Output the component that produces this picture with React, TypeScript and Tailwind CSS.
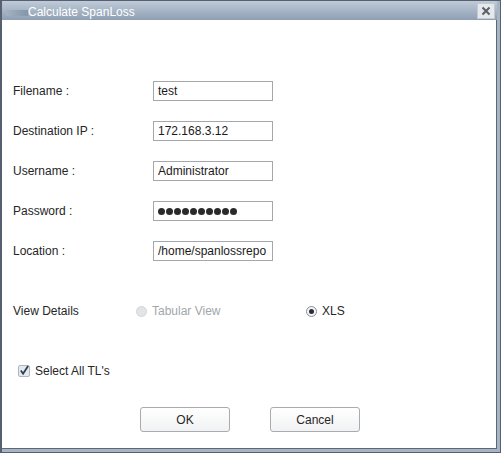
import React from "react";

const font = { fontFamily: '"Liberation Sans", Arial, sans-serif' };

function Field({ label, value, password }: { label: string; value: string; password?: boolean }) {
  return (
    <div className="flex items-center h-[20px]">
      <div className="w-[140px] text-[12px] text-[#262626]">{label}</div>
      <div className="w-[120px] h-[20px] border border-[#a4a7ab] bg-white flex items-center pl-[4px] overflow-hidden whitespace-nowrap text-[12px] text-[#1a1a1a]">
        {password ? (
          <span className="flex gap-[1px]">
            {Array.from({ length: 10 }).map((_, i) => (
              <span key={i} className="w-[7px] h-[7px] rounded-full bg-[#2a2a2a]" />
            ))}
          </span>
        ) : (
          value
        )}
      </div>
    </div>
  );
}

export default function App() {
  return (
    <div style={font} className="w-[501px] h-[453px] bg-[#56606e] pl-[2px] pt-[1px] pr-[1px] pb-[1px]">
      <div className="w-full h-full bg-[#a6b4c4] flex flex-col pr-[3px] pb-[3px]">
        {/* title bar */}
        <div className="h-[19px] bg-gradient-to-b from-[#bfcbd8] to-[#8f9fb3] flex items-center relative">
          <div className="absolute left-[4px] top-[9px] w-[22px] h-[6px] bg-gradient-to-r from-[#a3b1c2] to-[#8595aa]" />
          <span className="ml-[26px] mt-[3px] text-[12px] text-white leading-none">Calculate SpanLoss</span>
          <div className="ml-auto mr-[2px] mt-[1px] w-[18px] h-[16px] bg-[#e6e9ec] border border-[#c3cad2] flex items-center justify-center">
            <svg width="10" height="10" viewBox="0 0 10 10">
              <path d="M1.5 1.5 L8.5 8.5 M8.5 1.5 L1.5 8.5" stroke="#5a5f66" strokeWidth="2" />
            </svg>
          </div>
        </div>
        {/* content */}
        <div className="flex-1 bg-white border-r border-b border-[#5d6876] flex flex-col pl-[11px] pt-[61px]">
          <div className="flex flex-col gap-[20px]">
            <Field label="Filename :" value="test" />
            <Field label="Destination IP :" value="172.168.3.12" />
            <Field label="Username :" value="Administrator" />
            <Field label="Password :" value="" password />
            <Field label="Location :" value="/home/spanlossrepo" />
          </div>
          <div className="flex items-center h-[20px] mt-[40px] text-[12px]">
            <div className="w-[123px] text-[#262626]">View Details</div>
            <div className="w-[11px] h-[11px] rounded-full bg-[#e2e4e7] border border-[#d2d5d9]" />
            <span className="ml-[5px] text-[#a3a6aa] w-[154px]">Tabular View</span>
            <div className="w-[11px] h-[11px] rounded-full bg-[#f3f4f6] border border-[#8a8f96] flex items-center justify-center">
              <div className="w-[5px] h-[5px] rounded-full bg-[#2b2f35]" />
            </div>
            <span className="ml-[5px] text-[#262626]">XLS</span>
          </div>
          <div className="flex items-center h-[20px] mt-[40px] pl-[5px] text-[12px]">
            <div className="w-[12px] h-[12px] rounded-[2px] bg-[#e4e9ef] border border-[#aeb6c0] flex items-center justify-center">
              <svg width="11" height="11" viewBox="0 0 11 11" className="-mt-[2px]">
                <path d="M2 5.5 L4.5 9 L10 0.5" stroke="#2e3f55" strokeWidth="2" fill="none" />
              </svg>
            </div>
            <span className="ml-[5px] text-[#262626]">Select All TL's</span>
          </div>
          <div className="flex mt-[26px] ml-[127px] gap-[40px] text-[12px]">
            <button className="w-[90px] h-[25px] rounded-[3px] border border-[#a9abae] bg-gradient-to-b from-white to-[#f1f2f3] text-[#262626]">
              OK
            </button>
            <button className="w-[90px] h-[25px] rounded-[3px] border border-[#a9abae] bg-gradient-to-b from-white to-[#f1f2f3] text-[#262626]">
              Cancel
            </button>
          </div>
        </div>
      </div>
    </div>
  );
}
